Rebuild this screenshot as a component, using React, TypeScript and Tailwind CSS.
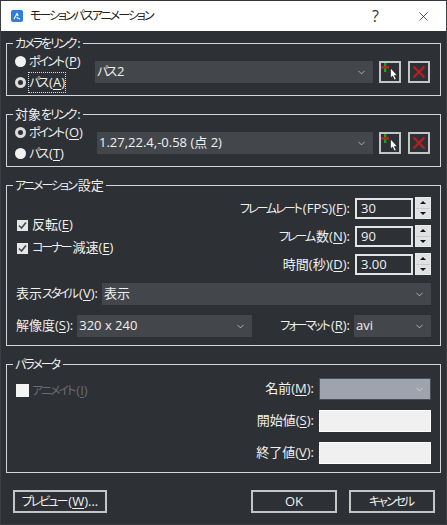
import React from 'react';
import { ChevronDown, X } from 'lucide-react';

const font = "font-['Segoe_UI','Open_Sans','Noto_Sans_CJK_JP',sans-serif]";

// the dialog font has narrow kana, so kana get their own size and spacing
const T = ({ s }: { s: string }) => (
  <>
    {s.split(/([\u3040-\u30FF]+)/).map((part, i) =>
      /^[\u3040-\u30FF]/.test(part) ? (
        <span key={i} className="text-[12px] tracking-[-2px] pr-[2px] [font-feature-settings:'palt']">{part}</span>
      ) : (
        part
      )
    )}
  </>
);

// mnemonic label, e.g. ポイント(P)
const Mn = ({ text, k, tail = ')', className = '' }: { text: string; k: string; tail?: string; className?: string }) => (
  <span className={`whitespace-nowrap ${className}`}>
    <T s={text} />(<span className="underline underline-offset-2">{k}</span>{tail}
  </span>
);

const Group = ({ title, children }: { title: string; children: React.ReactNode }) => (
  <fieldset className="border border-[#d4d5d6] mt-[10px] first:mt-[4px]">
    <legend className="ml-[6px] px-[2px] h-[16px] leading-[16px] text-[#f0f0f0]"><T s={title} /></legend>
    {children}
  </fieldset>
);

const Radio = ({ checked, children }: { checked?: boolean; children: React.ReactNode }) => (
  <div className="h-[21px] flex items-center gap-[3px]">
    <span className={`w-[11px] h-[11px] rounded-full shrink-0 ${checked ? 'border-[3px] border-[#dcdcdc] bg-[#2d3035]' : 'bg-[#f2f2f2]'}`} />
    {children}
  </div>
);

const Check = ({ children }: { children: React.ReactNode }) => (
  <div className="h-[16px] flex items-center gap-[4px]">
    <span className="w-[11px] h-[11px] bg-[#e6e6e6] flex items-center justify-center shrink-0">
      <svg width="9" height="9" viewBox="0 0 9 9" fill="none">
        <path d="M1 4.5 L3.5 7 L8 1.5" stroke="#44474c" strokeWidth="1.6" />
      </svg>
    </span>
    {children}
  </div>
);

const Combo = ({ value, className = '' }: { value?: string; className?: string }) => (
  <div className={`h-[22px] bg-[#43474c] flex items-center justify-between pl-[2px] pr-[6px] text-[#f0f0f0] ${className}`}>
    <span className="whitespace-nowrap">{value && <T s={value} />}</span>
    <ChevronDown size={11} strokeWidth={1.4} className="text-[#e8e8e8] shrink-0" />
  </div>
);

const PickIcon = () => (
  <button className="w-[22px] h-[22px] border-2 border-[#c4c5c6] bg-[#2d3035] shrink-0">
    <svg width="18" height="18" viewBox="0 0 18 18">
      <rect x="3" y="0" width="2.4" height="9" fill="#11a520" />
      <rect x="0" y="3.2" width="8" height="2.4" fill="#c81e1e" />
      <path d="M9.5 5 V15 L11.6 13 L13.4 17 L15.2 16.2 L13.4 12.4 L16.2 12.2 Z" fill="#fff" stroke="#111" strokeWidth="0.6" />
    </svg>
  </button>
);

const DeleteIcon = () => (
  <button className="w-[22px] h-[22px] border-2 border-[#c4c5c6] bg-[#2d3035] flex items-center justify-center shrink-0">
    <svg width="14" height="14" viewBox="0 0 14 14">
      <path d="M1.5 1.5 L12.5 12.5 M12.5 1.5 L1.5 12.5" stroke="#b52020" strokeWidth="2.4" />
    </svg>
  </button>
);

const Spinner = ({ label, value }: { label: React.ReactNode; value: string }) => (
  <div className="h-[21px] flex items-center justify-end">
    {label}
    <div className="ml-[5px] w-[58px] h-[21px] border-2 border-[#e4e4e4] pl-[4px] flex items-center text-[#f0f0f0]">{value}</div>
    <div className="ml-[2px] w-[16px] h-[22px] -mt-[1px] border border-[#e8e8e8] bg-[#c8c9ca] flex flex-col gap-[1px]">
      <span className="flex-1 bg-[#e0e1e2] flex items-center justify-center">
        <span className="w-0 h-0 border-x-[3px] border-x-transparent border-b-[3px] border-b-[#111]" />
      </span>
      <span className="flex-1 bg-[#e0e1e2] flex items-center justify-center">
        <span className="w-0 h-0 border-x-[3px] border-x-transparent border-t-[3px] border-t-[#111]" />
      </span>
    </div>
  </div>
);

const FootButton = ({ className = '', children }: { className?: string; children: React.ReactNode }) => (
  <button className={`h-[23px] border-2 border-[#c4c5c6] flex items-center justify-center text-[#f0f0f0] ${className}`}>
    {children}
  </button>
);

export default function App() {
  return (
    <div className={`w-[447px] h-[525px] bg-[#2d3035] bg-[radial-gradient(#383b41_0.5px,transparent_0.6px)] bg-[size:6px_6px] text-[13px] text-[#f0f0f0] overflow-hidden border-x border-b border-t border-x-[#3b3e43] border-b-[#3b3e43] border-t-[#33363b] ${font}`}>
      {/* Title bar */}
      <div className="h-[30px] bg-white flex items-center text-[#222]">
        <span className="ml-[10px] w-[12px] h-[12px] rounded-[2px] bg-[#2f7de1] flex items-center justify-center">
          <svg width="8" height="8" viewBox="0 0 8 8" fill="none">
            <path d="M1 7 L4 1.5 L5.2 4 M3.5 5.5 L7 7" stroke="#fff" strokeWidth="1.2" />
          </svg>
        </span>
        <span className="ml-[7px]"><T s="モーションパスアニメーション" /></span>
        <span className="ml-auto text-[16px] text-[#333]">?</span>
        <X size={15} strokeWidth={1.1} className="ml-[37px] mr-[15px] text-[#111]" />
      </div>

      {/* Content */}
      <div className="px-[5px]">
        <Group title="カメラをリンク:">
          <div className="flex items-center pl-[8px] pr-[10px] pb-[2px]">
            <div className="w-[80px] shrink-0 flex flex-col">
              <Radio><Mn text="ポイント" k="P" /></Radio>
              <Radio checked><span className="outline-1 outline-dotted outline-[#dcdcdc]"><Mn text="パス" k="A" /></span></Radio>
            </div>
            <Combo value="パス2" className="flex-1" />
            <div className="ml-[6px] flex gap-[7px]">
              <PickIcon />
              <DeleteIcon />
            </div>
          </div>
        </Group>

        <Group title="対象をリンク:">
          <div className="flex items-center pl-[8px] pr-[10px] pb-[2px]">
            <div className="w-[82px] shrink-0 flex flex-col">
              <Radio checked><Mn text="ポイント" k="O" /></Radio>
              <Radio><Mn text="パス" k="T" /></Radio>
            </div>
            <Combo value="1.27,22.4,-0.58 (点 2)" className="flex-1" />
            <div className="ml-[6px] flex gap-[7px]">
              <PickIcon />
              <DeleteIcon />
            </div>
          </div>
        </Group>

        <Group title="アニメーション設定">
          <div className="pl-[9px] pr-[9px] pb-[8px]">
            <div className="flex justify-between">
              <div className="pt-[24px] pl-[1px] flex flex-col gap-[7px]">
                <Check><Mn text="反転" k="E" /></Check>
                <Check><Mn text="コーナー減速" k="E" /></Check>
              </div>
              <div className="pt-[5px] flex flex-col gap-[7px]">
                <Spinner label={<Mn text="フレームレート(FPS)" k="F" tail="):" />} value="30" />
                <Spinner label={<Mn text="フレーム数" k="N" tail="):" />} value="90" />
                <Spinner label={<Mn text="時間(秒)" k="D" tail="):" />} value="3.00" />
              </div>
            </div>
            <div className="mt-[8px] flex items-center gap-[4px]">
              <Mn text="表示スタイル" k="V" tail="):" />
              <Combo value="表示" className="flex-1" />
            </div>
            <div className="mt-[10px] flex items-center">
              <Mn text="解像度" k="S" tail="):" />
              <Combo value="320 x 240" className="ml-[4px] w-[175px]" />
              <Mn text="フォーマット" k="R" tail="):" className="ml-auto" />
              <Combo value="avi" className="ml-[4px] w-[77px]" />
            </div>
          </div>
        </Group>

        <Group title="パラメータ">
          <div className="flex justify-between pl-[9px] pr-[9px] pt-[6px] pb-[8px]">
            <div className="pt-[5px] h-[20px] flex items-center gap-[3px] text-[#696b70]">
              <span className="w-[13px] h-[13px] bg-[#f4f4f4] shrink-0" />
              <Mn text="アニメイト" k="I" />
            </div>
            <div className="flex flex-col gap-[10px]">
              <div className="flex items-center justify-end gap-[5px]">
                <Mn text="名前" k="M" tail="):" />
                <div className="w-[112px] h-[22px] bg-[#9ea4ad] border border-[#4a4f55] flex items-center justify-end pr-[5px]">
                  <ChevronDown size={11} strokeWidth={1.4} className="text-[#e8e8e8]" />
                </div>
              </div>
              <div className="flex items-center justify-end gap-[5px]">
                <Mn text="開始値" k="S" tail="):" />
                <div className="w-[112px] h-[22px] bg-[#f0f0f0] border border-white" />
              </div>
              <div className="flex items-center justify-end gap-[5px]">
                <Mn text="終了値" k="V" tail="):" />
                <div className="w-[112px] h-[22px] bg-[#f0f0f0] border border-white" />
              </div>
            </div>
          </div>
        </Group>

        {/* Footer buttons */}
        <div className="mt-[17px] pl-[7px] pr-[6px] flex">
          <FootButton className="w-[94px]"><Mn text="プレビュー" k="W" tail=")..." /></FootButton>
          <FootButton className="ml-auto w-[86px]">OK</FootButton>
          <FootButton className="ml-[12px] w-[86px]"><T s="キャンセル" /></FootButton>
        </div>
      </div>
    </div>
  );
}
